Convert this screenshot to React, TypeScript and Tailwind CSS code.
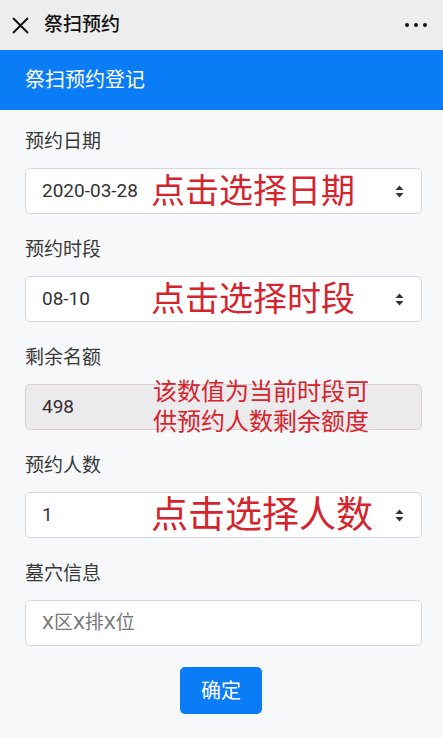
import React from "react";

const font = "font-['Roboto','Noto_Sans_CJK_SC',sans-serif]";

const Arrows = () => (
    <svg width="9" height="13" viewBox="0 0 9 13" className="shrink-0">
        <path d="M4.5 0.5 L8.5 5 L0.5 5 Z" fill="#333" />
        <path d="M4.5 12.5 L8.5 8 L0.5 8 Z" fill="#333" />
    </svg>
);

interface FieldProps {
    label: string;
    children: React.ReactNode;
}

const Field: React.FC<FieldProps> = ({ label, children }) => (
    <div className="flex flex-col">
        <div className="text-[19px] leading-[24px] text-[#383838]">{label}</div>
        <div className="mt-[14px] mb-[24px]">{children}</div>
    </div>
);

interface SelectBoxProps {
    value: string;
    hint: string;
    hintSize: string;
}

const SelectBox: React.FC<SelectBoxProps> = ({ value, hint, hintSize }) => (
    <div className="relative h-[46px] flex items-center justify-between pl-[16px] pr-[17px] bg-white border border-[#d6d8db] rounded-[5px]">
        <span className="text-[19px] text-[#333]">{value}</span>
        <Arrows />
        <span
            className={`absolute left-[125px] top-1/2 -translate-y-1/2 ${hintSize} leading-none text-[#d4242d] whitespace-nowrap`}
        >
            {hint}
        </span>
    </div>
);

export default function App() {
    return (
        <div className={`w-[443px] min-h-[738px] bg-[#f7f8fa] ${font}`}>
            {/* title bar */}
            <div className="h-[50px] bg-[#ededed] flex items-center pl-[12px] pr-[16px]">
                <svg width="17" height="17" viewBox="0 0 17 17">
                    <path d="M1 1 L16 16 M16 1 L1 16" stroke="#111" strokeWidth="1.9" />
                </svg>
                <span className="ml-[15px] text-[19px] font-medium text-[#111]">祭扫预约</span>
                <div className="ml-auto flex gap-[5px] items-center">
                    <span className="w-[4px] h-[4px] rounded-full bg-[#111]" />
                    <span className="w-[4px] h-[4px] rounded-full bg-[#111]" />
                    <span className="w-[4px] h-[4px] rounded-full bg-[#111]" />
                </div>
            </div>

            {/* blue header */}
            <div className="h-[60px] bg-[#0a7cf6] flex items-center pl-[25px]">
                <span className="text-[20px] text-white">祭扫预约登记</span>
            </div>

            {/* form */}
            <div className="pt-[20px] pl-[25px] pr-[21px] flex flex-col">
                <Field label="预约日期">
                    <SelectBox value="2020-03-28" hint="点击选择日期" hintSize="text-[34px]" />
                </Field>
                <Field label="预约时段">
                    <SelectBox value="08-10" hint="点击选择时段" hintSize="text-[34px]" />
                </Field>
                <Field label="剩余名额">
                    <div className="relative h-[46px] flex items-center pl-[16px] bg-[#ebebed] border border-[#e0cbce] rounded-[5px]">
                        <span className="text-[19px] text-[#3a2a2c]">498</span>
                        <div className="absolute left-[127px] top-1/2 -translate-y-1/2 text-[24px] leading-[30px] text-[#d4242d] whitespace-nowrap">
                            <div>该数值为当前时段可</div>
                            <div>供预约人数剩余额度</div>
                        </div>
                    </div>
                </Field>
                <Field label="预约人数">
                    <SelectBox value="1" hint="点击选择人数" hintSize="text-[37px]" />
                </Field>
                <Field label="墓穴信息">
                    <div className="h-[46px] flex items-center pl-[16px] bg-white border border-[#d6d8db] rounded-[5px]">
                        <span className="text-[19px] text-[#777]">X区X排X位</span>
                    </div>
                </Field>
                <div className="-mt-[3px] flex justify-center">
                    <button className="w-[82px] h-[47px] rounded-[5px] bg-[#0a7cf6] text-white text-[20px] mr-[5px]">
                        确定
                    </button>
                </div>
            </div>
        </div>
    );
}
